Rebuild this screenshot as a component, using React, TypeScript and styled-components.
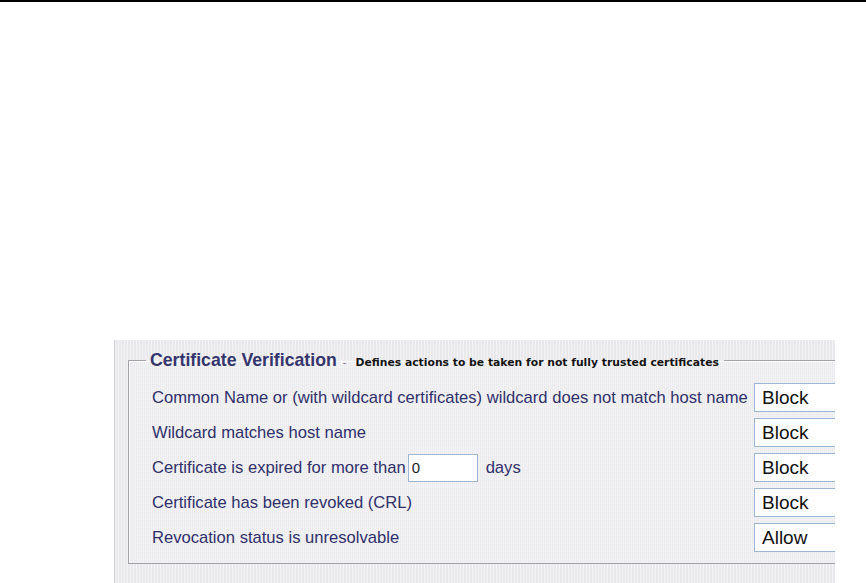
import React from "react";
import styled, { createGlobalStyle } from "styled-components";

const GlobalStyle = createGlobalStyle`
  html, body { margin: 0; padding: 0; background: #ffffff; }
  body {
    font-family: "Liberation Sans", Arial, sans-serif;
    width: 866px;
    height: 583px;
    overflow: hidden;
  }
`;

const Page = styled.div`
  width: 866px;
  height: 583px;
  display: flex;
  flex-direction: column;
  overflow: hidden;
`;

const TopRule = styled.div`
  flex: none;
  height: 2px;
  background: #000;
`;

const Panel = styled.section`
  flex: none;
  box-sizing: border-box;
  margin: 338px 0 0 114px;
  width: 721px;
  height: 243px;
  overflow: hidden;
  border-left: 1px solid #cdcdd1;
  padding: 10px 0 0 13px;
  background: repeating-linear-gradient(
    90deg,
    #f3f3f5 0px,
    #f3f3f5 1px,
    #e9e9ec 1px,
    #e9e9ec 3px
  );
`;

const Group = styled.fieldset`
  box-sizing: border-box;
  margin: 0;
  min-width: 0;
  width: 790px;
  padding: 10px 0 8px 23px;
  border: 1px solid #a2a2a8;
  border-right: none;
  box-shadow: inset 1px 1px 0 #ffffff;
  background-color: #eeeef1;
  background-image: repeating-linear-gradient(
      90deg,
      rgba(255, 255, 255, 0.3) 0px,
      rgba(255, 255, 255, 0.3) 1px,
      transparent 1px,
      transparent 2px
    ),
    repeating-linear-gradient(
      0deg,
      rgba(0, 0, 0, 0.015) 0px,
      rgba(0, 0, 0, 0.015) 1px,
      transparent 1px,
      transparent 2px
    );
`;

const Legend = styled.legend`
  margin-left: -6px;
  padding: 0 5px 0 4px;
  height: 20px;
  display: flex;
  align-items: baseline;
  white-space: nowrap;
`;

const Title = styled.span`
  font: bold 17.7px/20px "Liberation Sans", Arial, sans-serif;
  color: #35356d;
`;

const Dash = styled.span`
  font: 11px/20px "Liberation Sans", Arial, sans-serif;
  color: #7a7a80;
  margin: 0 9px 0 6px;
`;

const Desc = styled.span`
  font: bold 10.8px/20px "DejaVu Sans", Verdana, sans-serif;
  color: #141414;
`;

const Row = styled.div`
  display: grid;
  grid-template-columns: 602px 110px;
  align-items: center;
  height: 35px;
`;

const Label = styled.span`
  display: flex;
  align-items: center;
  white-space: nowrap;
  font-size: 16.6px;
  color: #30306a;
`;

const Select = styled.select`
  appearance: none;
  -webkit-appearance: none;
  box-sizing: border-box;
  height: 29px;
  width: 110px;
  margin: 0;
  border: 1px solid #9cb6d4;
  border-radius: 0;
  background: #ffffff;
  font: 19px "Liberation Sans", Arial, sans-serif;
  color: #111;
  padding: 0 0 0 7px;
  outline: none;
`;

const DaysInput = styled.input`
  box-sizing: border-box;
  width: 70px;
  height: 28px;
  margin: 0 8px 0 2px;
  border: 1px solid #9cb6d4;
  border-radius: 0;
  background: #ffffff;
  font: 15px "Liberation Sans", Arial, sans-serif;
  color: #222;
  padding: 0 0 0 3px;
  outline: none;
`;

type Rule = { label: React.ReactNode; value: string };

const rules: Rule[] = [
  {
    label: "Common Name or (with wildcard certificates) wildcard does not match host name",
    value: "Block",
  },
  { label: "Wildcard matches host name", value: "Block" },
  {
    label: (
      <>
        Certificate is expired for more than
        <DaysInput defaultValue="0" />
        days
      </>
    ),
    value: "Block",
  },
  { label: "Certificate has been revoked (CRL)", value: "Block" },
  { label: "Revocation status is unresolvable", value: "Allow" },
];

export default function App() {
  return (
    <Page>
      <GlobalStyle />
      <TopRule />
      <Panel>
        <Group>
          <Legend>
            <Title>Certificate Verification</Title>
            <Dash>-</Dash>
            <Desc>Defines actions to be taken for not fully trusted certificates</Desc>
          </Legend>
          {rules.map((r, i) => (
            <Row key={i}>
              <Label>{r.label}</Label>
              <Select defaultValue={r.value}>
                <option>Block</option>
                <option>Allow</option>
              </Select>
            </Row>
          ))}
        </Group>
      </Panel>
    </Page>
  );
}
